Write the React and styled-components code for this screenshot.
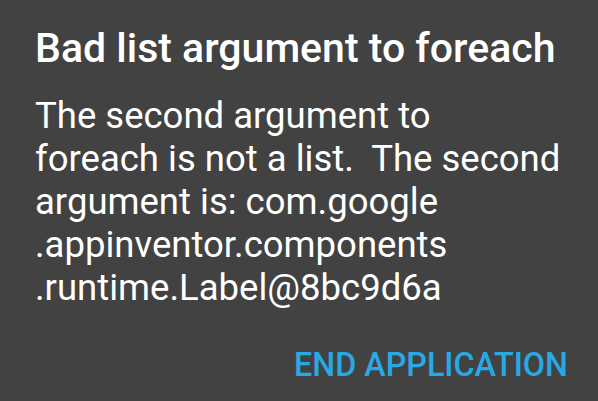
import React from 'react';
import styled, { createGlobalStyle } from 'styled-components';

const Global = createGlobalStyle`
  html, body {
    margin: 0;
    padding: 0;
    background: #424242;
  }
  body {
    font-family: Roboto, 'Noto Sans', sans-serif;
    -webkit-font-smoothing: antialiased;
  }
`;

const Dialog = styled.div`
  width: 598px;
  height: 401px;
  box-sizing: border-box;
  background: #424242;
  display: flex;
  flex-direction: column;
  padding: 22px 30px 0 35px;
`;

const Title = styled.h1`
  margin: 0;
  font-size: 41px;
  font-weight: 500;
  line-height: 52px;
  color: #ffffff;
`;

const Message = styled.p`
  margin: 20px 0 0;
  font-size: 36.5px;
  font-weight: 400;
  line-height: 43px;
  color: #ffffff;
  white-space: pre;
`;

const Actions = styled.div`
  margin-top: auto;
  display: flex;
  justify-content: flex-end;
  padding-bottom: 17px;
`;

const TextButton = styled.button`
  background: none;
  border: none;
  padding: 0;
  font-family: inherit;
  font-size: 32.3px;
  font-weight: 500;
  color: #29a9e3;
  cursor: pointer;
`;

const lines = [
  'The second argument to',
  'foreach is not a list.  The second',
  'argument is: com.google',
  '.appinventor.components',
  '.runtime.Label@8bc9d6a',
];

export default function App() {
  return (
    <>
      <Global />
      <Dialog>
        <Title>Bad list argument to foreach</Title>
        <Message>{lines.join('\n')}</Message>
        <Actions>
          <TextButton>END APPLICATION</TextButton>
        </Actions>
      </Dialog>
    </>
  );
}
